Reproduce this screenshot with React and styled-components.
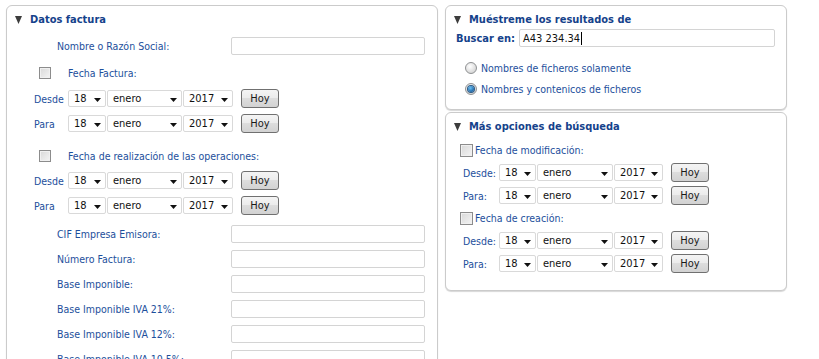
import React from 'react';
import styled, { createGlobalStyle } from 'styled-components';

const GlobalStyle = createGlobalStyle`
  html, body {
    margin: 0;
    padding: 0;
    background: #fff;
    overflow: hidden;
  }
  body {
    font-family: "DejaVu Sans Condensed", "Liberation Sans", sans-serif;
    font-size: 10.5px;
  }
`;

const Page = styled.div`
  display: flex;
  align-items: flex-start;
  gap: 7px;
  height: 359px;
  box-sizing: border-box;
  padding: 5px 0 0 6px;
  overflow: hidden;
`;

const Column = styled.div`
  display: flex;
  flex-direction: column;
  gap: 2px;
  width: 342px;
`;

const Panel = styled.section`
  box-sizing: border-box;
  width: ${p => p.$width}px;
  min-height: ${p => p.$minHeight || 0}px;
  padding-bottom: ${p => p.$pb || 0}px;
  border: 1px solid #cbcbcb;
  border-radius: 6px;
  background: #fff;
  box-shadow: 0 1px 1px rgba(0, 0, 0, 0.16);
  display: flex;
  flex-direction: column;
`;

const PanelHeader = styled.div`
  display: flex;
  align-items: center;
  gap: 8px;
  height: 26px;
  padding-left: 8px;
  color: #15428b;
  font-weight: bold;
  font-size: 11px;
`;

const Triangle = () => (
  <svg width="7" height="9" viewBox="0 0 7 9">
    <polygon points="0,1 7,1 3.5,9" fill="#3d3d3d" />
  </svg>
);

const Row = styled.div`
  display: flex;
  align-items: center;
  height: ${p => p.$h}px;
  margin-top: ${p => p.$mt || 0}px;
  padding-left: ${p => p.$pl || 0}px;
  gap: ${p => p.$gap || 0}px;
`;

const Label = styled.span`
  color: #1d4f9c;
  width: ${p => (p.$w ? `${p.$w}px` : 'auto')};
  flex-shrink: 0;
  white-space: nowrap;
`;

const BoldLabel = styled.span`
  color: #15428b;
  font-weight: bold;
  font-size: 11px;
  width: ${p => p.$w}px;
`;

const TextField = styled.div`
  box-sizing: border-box;
  width: ${p => p.$w}px;
  height: 18px;
  border: 1px solid #d4d4d4;
  border-radius: 2px;
  background: #fff;
  display: flex;
  align-items: center;
  padding-left: 3px;
  color: #111;
  font-size: 11px;
`;

const Caret = styled.span`
  display: inline-block;
  width: 1px;
  height: 13px;
  margin-left: 1px;
  background: #000;
`;

const Check = styled.span`
  box-sizing: border-box;
  width: ${p => p.$size || 12}px;
  height: ${p => p.$size || 12}px;
  border: 1px solid #8c8c8c;
  background: linear-gradient(135deg, #d8d8d8, #f4f4f4);
  box-shadow: inset 0 0 0 1px #f0f0f0;
  flex-shrink: 0;
`;

const Radio = styled.span`
  box-sizing: border-box;
  width: 12px;
  height: 12px;
  border-radius: 50%;
  border: 1px solid #8f9193;
  background: radial-gradient(circle at 40% 35%, #ffffff, #d6d6d6 75%);
  display: flex;
  align-items: center;
  justify-content: center;
  flex-shrink: 0;

  &::after {
    content: "";
    display: ${p => (p.$checked ? 'block' : 'none')};
    width: 6px;
    height: 6px;
    border-radius: 50%;
    background: radial-gradient(circle at 40% 35%, #6cc2f5, #12599c 80%);
    box-shadow: 0 0 0 1px #2a5a86;
  }
`;

const ComboBox = styled.div`
  box-sizing: border-box;
  width: ${p => p.$w}px;
  height: 17px;
  border: 1px solid #d9d9d9;
  border-radius: 2px;
  background: #fff;
  display: flex;
  align-items: center;
  justify-content: space-between;
  padding: 0 4px 0 5px;
  color: #111;
  font-size: 11px;
  flex-shrink: 0;

  svg {
    margin-top: 3px;
  }
`;

const DateGroup = styled.div`
  display: flex;
  align-items: center;
  gap: 1px;
`;

const HoyButton = styled.button`
  box-sizing: border-box;
  width: 38px;
  height: ${p => p.$h || 19}px;
  margin-left: 8px;
  padding: 0;
  border: 1px solid #707070;
  border-radius: 3px;
  background: linear-gradient(#f4f4f4, #ececec 45%, #dddddd 50%, #d2d2d2);
  font-family: inherit;
  font-size: 11px;
  color: #1a1a1a;
  flex-shrink: 0;
`;

const Combo = ({ w, value }) => (
  <ComboBox $w={w}>
    <span>{value}</span>
    <svg width="7" height="4" viewBox="0 0 7 4">
      <polygon points="0,0 7,0 3.5,4" fill="#111" />
    </svg>
  </ComboBox>
);

const DateRow = ({ label, h, pl, labelW, widths, btnH }) => (
  <Row $h={h} $pl={pl}>
    <Label $w={labelW}>{label}</Label>
    <DateGroup>
      <Combo w={widths[0]} value="18" />
      <Combo w={widths[1]} value="enero" />
      <Combo w={widths[2]} value="2017" />
    </DateGroup>
    <HoyButton $h={btnH}>Hoy</HoyButton>
  </Row>
);

const leftWidths = [38, 75, 50];
const rightWidths = [37, 76, 49];

const fields = [
  'CIF Empresa Emisora:',
  'Número Factura:',
  'Base Imponible:',
  'Base Imponible IVA 21%:',
  'Base Imponible IVA 12%:',
  'Base Imponible IVA 10,5%:',
];

const Field = ({ label }) => (
  <Row $h={25} $pl={50}>
    <Label $w={174}>{label}</Label>
    <TextField $w={194} />
  </Row>
);

export default function App() {
  return (
    <>
      <GlobalStyle />
      <Page>
        <Panel $width={432} $minHeight={420}>
          <PanelHeader>
            <Triangle />
            <span>Datos factura</span>
          </PanelHeader>
          <Row $h={28} $pl={50}>
            <Label $w={174}>Nombre o Razón Social:</Label>
            <TextField $w={194} />
          </Row>
          <Row $h={26} $pl={32} $gap={17}>
            <Check />
            <Label>Fecha Factura:</Label>
          </Row>
          <DateRow label="Desde" h={25} pl={27} labelW={34} widths={leftWidths} />
          <DateRow label="Para" h={25} pl={27} labelW={34} widths={leftWidths} />
          <Row $h={25} $mt={7} $pl={32} $gap={17}>
            <Check />
            <Label>Fecha de realización de las operaciones:</Label>
          </Row>
          <DateRow label="Desde" h={25} pl={27} labelW={34} widths={leftWidths} />
          <DateRow label="Para" h={25} pl={27} labelW={34} widths={leftWidths} />
          <Row $h={3} />
          {fields.map(f => (
            <Field key={f} label={f} />
          ))}
        </Panel>

        <Column>
          <Panel $width={342} $pb={10}>
            <PanelHeader>
              <Triangle />
              <span>Muéstreme los resultados de</span>
            </PanelHeader>
            <Row $h={18} $mt={-3} $pl={10}>
              <BoldLabel $w={63}>Buscar en:</BoldLabel>
              <TextField $w={256}>
                A43 234.34
                <Caret />
              </TextField>
            </Row>
            <Row $h={20} $mt={11} $pl={19} $gap={4}>
              <Radio />
              <Label>Nombres de ficheros solamente</Label>
            </Row>
            <Row $h={21} $pl={19} $gap={4}>
              <Radio $checked />
              <Label>Nombres y contenicos de ficheros</Label>
            </Row>
          </Panel>

          <Panel $width={342} $pb={15}>
            <PanelHeader>
              <Triangle />
              <span>Más opciones de búsqueda</span>
            </PanelHeader>
            <Row $h={22} $pl={14} $gap={2}>
              <Check $size={13} />
              <Label>Fecha de modificación:</Label>
            </Row>
            <DateRow label="Desde:" h={23} pl={17} labelW={36} widths={rightWidths} btnH={19} />
            <DateRow label="Para:" h={23} pl={17} labelW={36} widths={rightWidths} btnH={19} />
            <Row $h={22} $pl={14} $gap={2}>
              <Check $size={13} />
              <Label>Fecha de creación:</Label>
            </Row>
            <DateRow label="Desde:" h={23} pl={17} labelW={36} widths={rightWidths} btnH={19} />
            <DateRow label="Para:" h={23} pl={17} labelW={36} widths={rightWidths} btnH={19} />
          </Panel>
        </Column>
      </Page>
    </>
  );
}
